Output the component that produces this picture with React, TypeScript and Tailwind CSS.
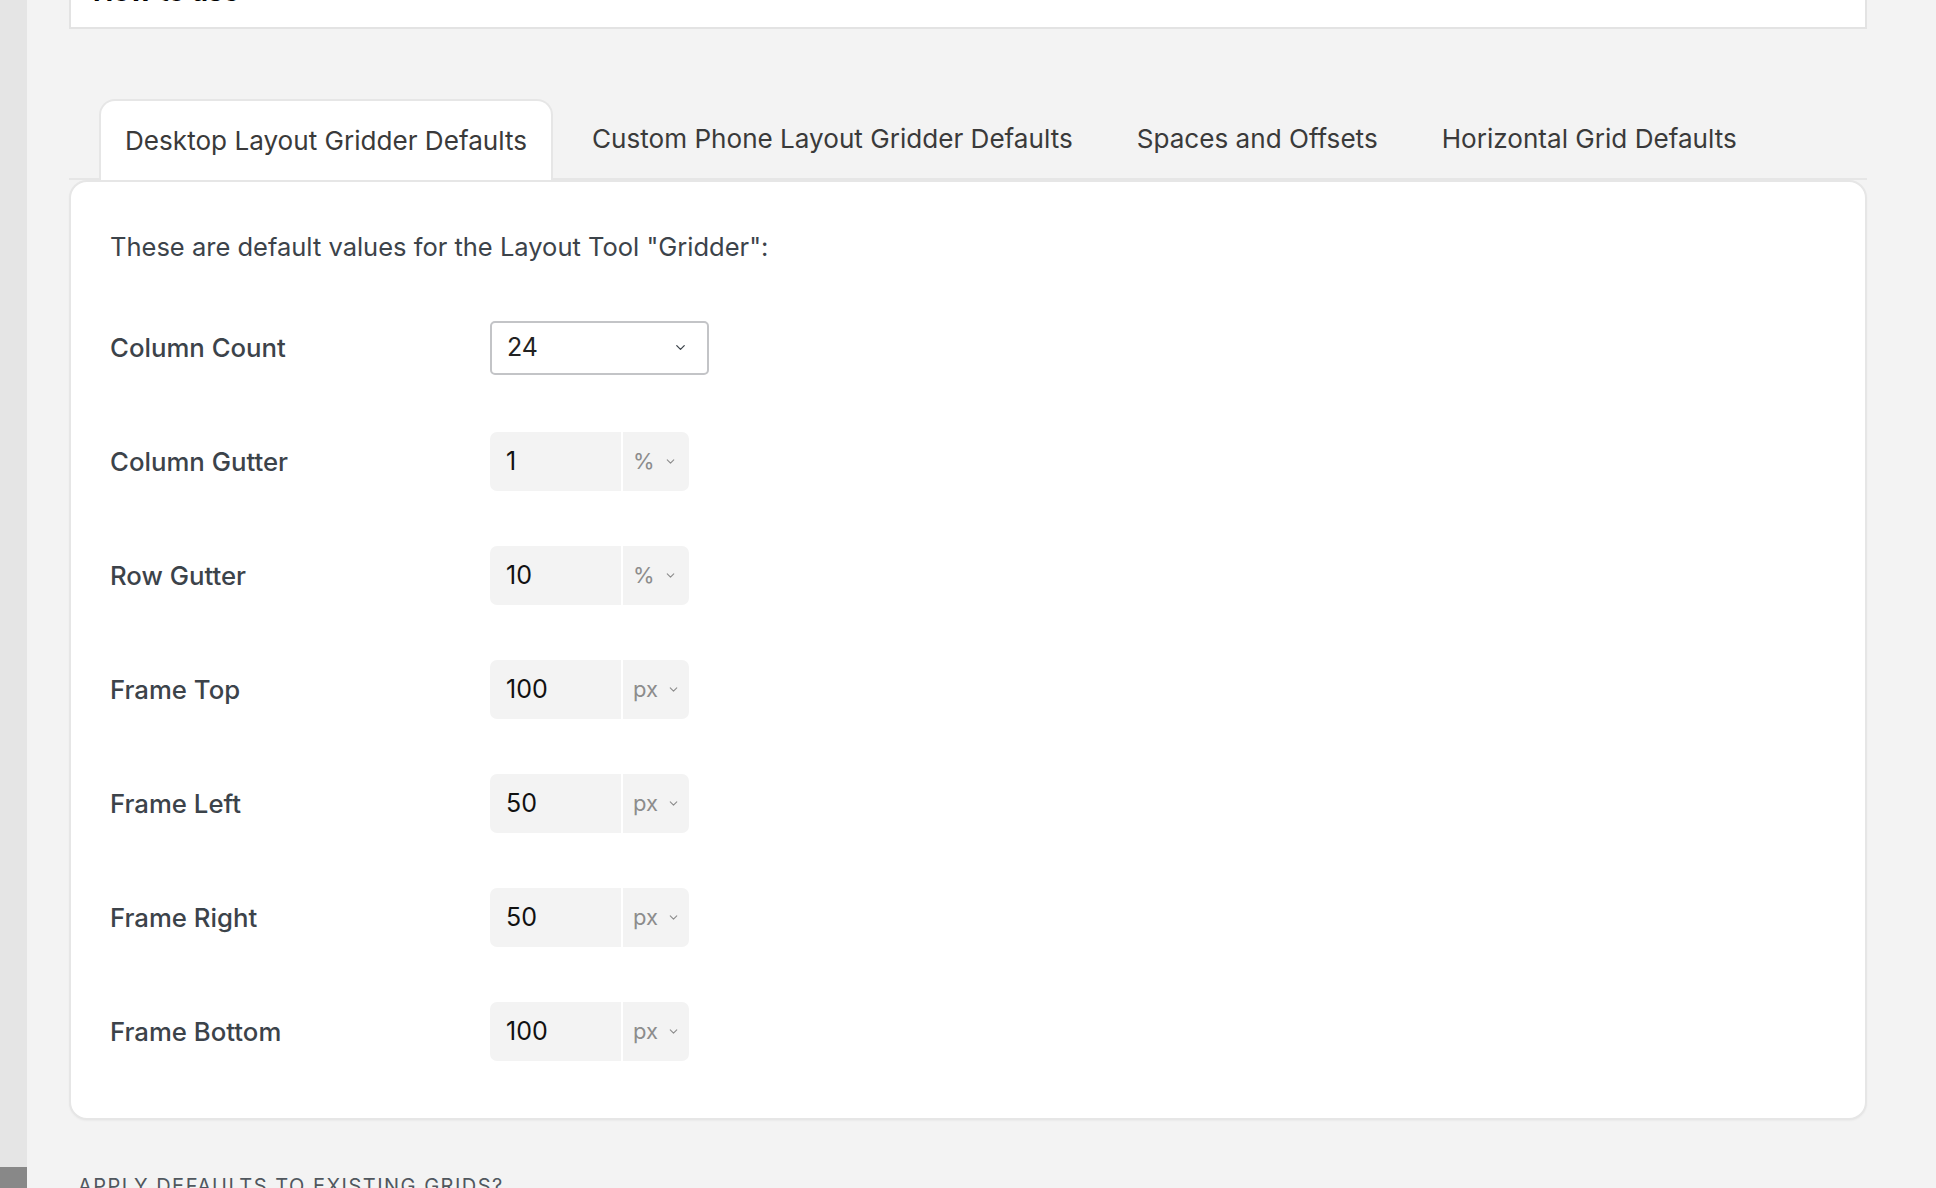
import { ChevronDown } from 'lucide-react';

const rows = [
  { label: 'Frame Top', value: '100', unit: 'px' },
  { label: 'Frame Left', value: '50', unit: 'px' },
  { label: 'Frame Right', value: '50', unit: 'px' },
  { label: 'Frame Bottom', value: '100', unit: 'px' },
];

const tabs = [
  'Desktop Layout Gridder Defaults',
  'Custom Phone Layout Gridder Defaults',
  'Spaces and Offsets',
  'Horizontal Grid Defaults',
];

function UnitInput({ value, unit }: { value: string; unit: string }) {
  return (
    <div className="flex h-[59px] w-[199px] overflow-hidden rounded-[7px]">
      <div className="flex w-[131px] items-center bg-[#f3f3f3] pl-4 text-[25px] text-[#111]">
        {value}
      </div>
      <div className="w-[2px] bg-white" />
      <div className="flex flex-1 items-center gap-[9px] bg-[#f3f3f3] pl-[10px] text-[22px] text-[#8c8c8c]">
        {unit}
        <ChevronDown size={13} strokeWidth={2} className="text-[#8c8c8c]" />
      </div>
    </div>
  );
}

function Row({ label, children }: { label: string; children: React.ReactNode }) {
  return (
    <div className="flex h-[59px] items-center">
      <div className="w-[380px] text-[25.75px] font-medium text-[#3c434a]">{label}</div>
      {children}
    </div>
  );
}

export default function App() {
  return (
    <div
      className="flex h-[1188px] overflow-hidden bg-[#f3f3f3] leading-[1.3]"
      style={{ fontFamily: 'Inter, Roboto, "Noto Sans", sans-serif' }}
    >
      {/* admin sidebar edge */}
      <aside className="flex w-[27px] flex-col justify-end bg-[#e5e5e5]">
        <div className="h-[21px] bg-[#888]" />
      </aside>

      <main className="flex-1 pl-[42px] pr-[69px]">
        {/* How to use card (scrolled off) */}
        <div className="h-[29px] overflow-hidden border-x-2 border-b-2 border-[#e3e3e3] bg-white">
          <div className="-mt-[26px] pl-[22px] text-[27px] font-bold text-black">How to use</div>
        </div>

        {/* Tabs */}
        <div className="mt-[70px] flex items-end gap-[14px] border-b-2 border-[#e6e6e6] pl-[30px]">
          {tabs.map((t, i) => (
            <div
              key={t}
              className={
                i === 0
                  ? '-mb-[2px] flex h-[81px] items-center rounded-t-[16px] border-x-2 border-t-2 border-[#e6e6e6] bg-white px-[24px] text-[26.1px] text-[#3a3a3a]'
                  : 'flex h-[79px] items-center px-[25px] text-[26.1px] text-[#3a3a3a]'
              }
            >
              {t}
            </div>
          ))}
        </div>

        {/* Settings card */}
        <div className="rounded-[18px] border-2 border-[#e6e6e6] bg-white pb-[57px] pl-[39px] pt-[48px] shadow-[0_1px_2px_rgba(0,0,0,0.04)]">
          <p className="text-[25.5px] text-[#3c434a]">These are default values for the Layout Tool "Gridder":</p>

          <div className="mt-[55px] flex flex-col gap-[55px]">
            <Row label="Column Count">
              <div className="flex h-[54px] w-[219px] items-center justify-between rounded-[5px] border-2 border-[#c3c4c7] bg-white pl-[15px] pr-[19px] text-[25px] text-[#222]">
                24
                <ChevronDown size={15} strokeWidth={2} className="text-[#3c434a]" />
              </div>
            </Row>
            <Row label="Column Gutter">
              <UnitInput value="1" unit="%" />
            </Row>
            <Row label="Row Gutter">
              <UnitInput value="10" unit="%" />
            </Row>
            {rows.map((r) => (
              <Row key={r.label} label={r.label}>
                <UnitInput value={r.value} unit={r.unit} />
              </Row>
            ))}
          </div>
        </div>

        <div className="mt-[53px] pl-[9px] text-[20px] uppercase tracking-[1.5px] text-[#50575e]">
          Apply defaults to existing grids?
        </div>
      </main>
    </div>
  );
}
